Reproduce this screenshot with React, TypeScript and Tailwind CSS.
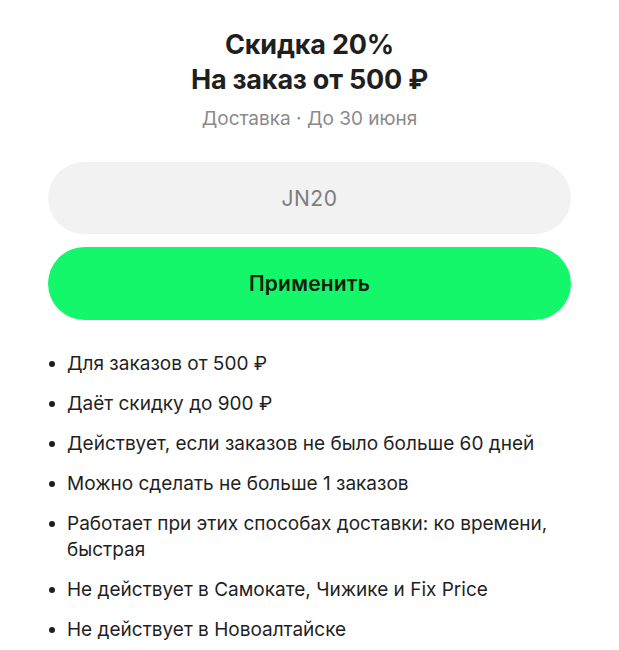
import { useState } from "react";

const conditions = [
	"Для заказов от 500 ₽",
	"Даёт скидку до 900 ₽",
	"Действует, если заказов не было больше 60 дней",
	"Можно сделать не больше 1 заказов",
	"Работает при этих способах доставки: ко времени, быстрая",
	"Не действует в Самокате, Чижике и Fix Price",
	"Не действует в Новоалтайске",
];

export default function App() {
	const [code, setCode] = useState("JN20");

	return (
		<div className="min-h-screen bg-white px-12 pt-[27px] text-[#1f1f1f] font-['Inter',sans-serif]">
			<div className="text-center">
				<h1 className="text-[27px] font-bold leading-[35px] tracking-[-0.2px]">
					Скидка 20%
					<br />
					На заказ от 500 ₽
				</h1>
				<p className="mt-[10px] text-[19px] leading-6 text-[#8a8a8a]">
					Доставка · До 30 июня
				</p>
			</div>

			<input
				value={code}
				onChange={(e) => setCode(e.target.value)}
				className="mt-[31px] block h-[72px] w-full rounded-full bg-[#f2f2f2] text-center text-[21px] tracking-[0.5px] text-[#7d7d7d] outline-none"
			/>
			<button className="mt-[13px] block h-[73px] w-full rounded-full bg-[#14f76b] text-[21px] font-semibold tracking-[0.2px] text-[#10200f]">
				Применить
			</button>

			<ul className="mt-[31px] flex flex-col gap-[14px] pb-6">
				{conditions.map((item) => (
					<li key={item} className="flex text-[19px] leading-[26px]">
						<span className="mt-[10px] ml-px mr-[12px] h-[6px] w-[6px] shrink-0 rounded-full bg-[#1f1f1f]" />
						<span>{item}</span>
					</li>
				))}
			</ul>
		</div>
	);
}
